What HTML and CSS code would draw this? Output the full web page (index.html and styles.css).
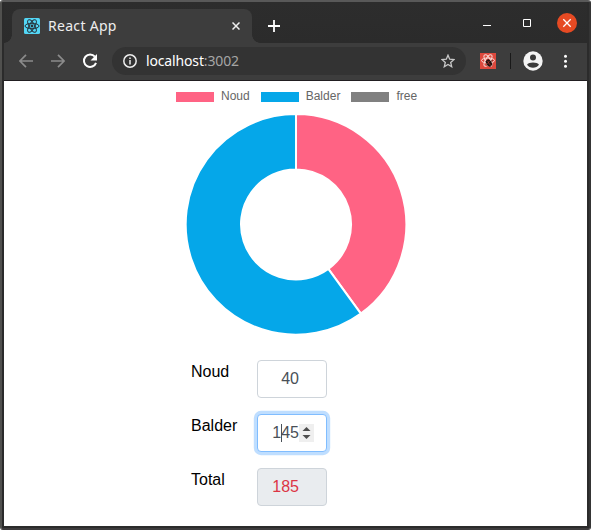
FILE: index.html
```html
<!DOCTYPE html>
<html lang="en">
<head>
<meta charset="utf-8">
<title>React App</title>
<link rel="stylesheet" href="styles.css">
</head>
<body>
<div class="window">
  <header class="titlebar">
    <div class="tab">
      <svg class="favicon" width="16" height="16" viewBox="0 0 16 16"><rect width="16" height="16" rx="1.5" fill="#53d6f5"/><g fill="none" stroke="#26323a" stroke-width="1"><ellipse cx="8" cy="8" rx="7" ry="2.7"/><ellipse cx="8" cy="8" rx="7" ry="2.7" transform="rotate(60 8 8)"/><ellipse cx="8" cy="8" rx="7" ry="2.7" transform="rotate(120 8 8)"/></g><circle cx="8" cy="8" r="1.4" fill="#26323a"/></svg>
      <span class="tab-title">React App</span>
      <svg class="tab-close" width="8" height="8" viewBox="0 0 8 8"><path d="M.5.5l7 7M7.500.5l-7 7" stroke="#eee" stroke-width="1.5"/></svg>
    </div>
    <svg class="new-tab" width="12" height="12" viewBox="0 0 12 12"><path d="M6 0v12M0 6h12" stroke="#fff" stroke-width="1.8"/></svg>
    <div class="controls">
      <svg width="8" height="10" viewBox="0 0 8 10"><path d="M0 7.500h8" stroke="#fff"/></svg>
      <svg width="8" height="8" viewBox="0 0 8 8"><path d="M.5.5h7v7h-7z" fill="none" stroke="#fff"/></svg>
      <svg width="20" height="20" viewBox="0 0 20 20"><circle cx="10" cy="10" r="10" fill="#e64a23"/><path d="M6.300 6.300l7.400 7.400M13.700 6.300l-7.400 7.400" stroke="#fff" stroke-width="1.300"/></svg>
    </div>
  </header>
  <nav class="toolbar">
    <svg class="back" width="14" height="14" viewBox="0 0 14 14"><path d="M14 7H1.300M7 .8L.9 7 7 13.200" fill="none" stroke="#8b8b8b" stroke-width="1.700"/></svg>
    <svg class="forward" width="14" height="14" viewBox="0 0 14 14"><path d="M0 7h12.700M7 .8L13.100 7 7 13.200" fill="none" stroke="#8b8b8b" stroke-width="1.700"/></svg>
    <svg class="reload" width="16" height="16" viewBox="0 0 16 16"><path d="M12.900 3.700A6.200 6.200 0 1 0 14 9.800" fill="none" stroke="#fff" stroke-width="2"/><path d="M15 1v6.500H8.500z" fill="#fff"/></svg>
    <div class="address">
      <svg width="14" height="14" viewBox="0 0 14 14"><circle cx="7" cy="7" r="6.200" fill="none" stroke="#ededed" stroke-width="1.500"/><path d="M7 6v4.600M7 3.400v1.500" stroke="#ededed" stroke-width="1.500"/></svg>
      <span class="url">localhost<span class="port">:3002</span></span>
      <svg class="star" width="14" height="14" viewBox="0 0 14 14"><path d="M7 1.200l1.700 4 4.300.4-3.300 2.800 1 4.300L7 10.400l-3.700 2.300 1-4.300L1 5.600l4.300-.4z" fill="none" stroke="#c9c9c9" stroke-width="1.300"/></svg>
    </div>
    <svg class="extension" width="16" height="16" viewBox="0 0 16 16"><rect width="16" height="16" fill="#dd493d"/><g fill="none" stroke="#f8dcd8" stroke-width="1"><ellipse cx="8" cy="7.500" rx="6.500" ry="2.500"/><ellipse cx="8" cy="7.500" rx="6.500" ry="2.500" transform="rotate(60 8 7.500)"/><ellipse cx="8" cy="7.500" rx="6.500" ry="2.500" transform="rotate(120 8 7.500)"/></g><ellipse cx="9" cy="10" rx="2.600" ry="3.600" fill="#24110f" transform="rotate(-35 9 10)"/><path d="M5.500 8.500l7 3.500M6.500 13l6-6M8 6l2 8" stroke="#24110f" stroke-width=".8"/><path d="M7.500 8l3 4.500M9.500 8l-2 3" stroke="#a9362e" stroke-width=".7"/></svg>
    <span class="divider"></span>
    <svg class="profile" width="20" height="20" viewBox="0 0 20 20"><circle cx="10" cy="10" r="9.700" fill="#f4f4f4"/><circle cx="10" cy="6.400" r="3" fill="#3b3b3b"/><path d="M4 13.700C5.500 10.800 14.500 10.800 16 13.700 13.500 17.600 6.500 17.600 4 13.700z" fill="#3b3b3b"/></svg>
    <svg class="menu" width="4" height="14" viewBox="0 0 4 14"><g fill="#fff"><circle cx="2.500" cy="2.300" r="1.500"/><circle cx="2.500" cy="7.300" r="1.500"/><circle cx="2.500" cy="12.300" r="1.500"/></g></svg>
  </nav>
  <main class="page">
    <div class="legend">
      <span class="key"><i class="swatch pink"></i>Noud</span>
      <span class="key"><i class="swatch blue"></i>Balder</span>
      <span class="key"><i class="swatch gray"></i>free</span>
    </div>
    <svg class="chart" width="222" height="223" viewBox="-111 -111.400 222 223">
      <g stroke="#fff" stroke-width="2">
        <path d="M0-110.300A110.300 110.300 0 0 1 64.830 89.230L32.330 44.500A55 55 0 0 0 0-55z" fill="#ff6384"/>
        <path d="M64.830 89.230A110.300 110.300 0 1 1 0-110.300V-55A55 55 0 1 0 32.330 44.500z" fill="#05a7e9"/>
      </g>
    </svg>
    <form class="form">
      <div class="row"><label for="noud">Noud</label><div class="field"><input id="noud" value="40"></div></div>
      <div class="row"><label for="balder">Balder</label><div class="field"><input id="balder" class="focused" value="145"><span class="caret"></span><svg class="spinner" width="15" height="18" viewBox="0 0 15 18"><path d="M0 0h15v18H0z" fill="#efefef"/><path d="M3.500 7L7.500 3l4 4zM3.500 11l4 4 4-4z" fill="#4d4d4d"/></svg></div></div>
      <div class="row"><label for="total">Total</label><div class="field"><input id="total" class="total" value="185" readonly></div></div>
    </form>
  </main>
</div>
</body>
</html>
```
FILE: styles.css
```css
* { box-sizing: border-box; }
body { margin: 0; background: #fff; font-family: "Liberation Sans", Arial, sans-serif; overflow: hidden; }
svg { display: block; flex: none; }
.window { width: 591px; height: 530px; display: flex; flex-direction: column; background: #2b2b2b; border-top: 2px solid #595959; border-left: 2px solid #50504e; border-right: 2px solid #353535; border-bottom: 2px solid #3d3b3c; border-radius: 3px; padding: 0 2px 2px; }
.titlebar { height: 41px; display: flex; align-items: flex-start; padding: 7px 10px 0 8px; background: linear-gradient(#2d2d2d, #2b2b2b); flex: none; }
.tab { position: relative; width: 240px; height: 34px; display: flex; align-items: center; padding: 0 12px; background: #3d3d3d; border-radius: 8px 8px 0 0; }
.tab::before, .tab::after { content: ""; position: absolute; bottom: 0; width: 8px; height: 8px; }
.tab::before { left: -8px; background: radial-gradient(circle at 0 0, transparent 7.5px, #3d3d3d 8px); }
.tab::after { right: -8px; background: radial-gradient(circle at 100% 0, transparent 7.5px, #3d3d3d 8px); }
.tab-title { margin-left: 8px; font: 14px/20px "Noto Sans", sans-serif; letter-spacing: .3px; color: #eee; white-space: nowrap; }
.tab-close { margin-left: auto; }
.new-tab { margin: 11px 0 0 16px; }
.controls { margin: 4px 0 0 auto; display: flex; align-items: center; gap: 32px; }
.controls svg:last-child { margin-left: -6px; }
.toolbar { height: 38px; flex: none; display: flex; align-items: center; padding: 0 20px 2px 15px; background: #3d3d3d; border-bottom: 1px solid #211e21; }
.forward { margin-left: 18px; }
.reload { margin-left: 17px; }
.address { margin-left: 14px; width: 354px; height: 28px; border-radius: 14px; background: #333; display: flex; align-items: center; padding: 0 11px; }
.url { margin-left: 9px; font: 14px/20px "Noto Sans", sans-serif; letter-spacing: -.15px; color: #fff; }
.port { color: #a5a5a5; }
.star { margin-left: auto; }
.extension { margin-left: 14px; }
.divider { width: 1px; height: 16px; background: #191919; margin-left: 14px; }
.profile { margin-left: 12px; }
.menu { margin-left: auto; }
.page { flex: 1; background: #fff; display: flex; flex-direction: column; min-height: 0; }
.legend { display: flex; gap: 11px; margin: 8px 0 0 172px; height: 14px; font-size: 12px; line-height: 14px; color: #666; }
.key { display: flex; align-items: center; }
.swatch { width: 38px; height: 10px; margin: 2px 7px 0 0; }
.pink { background: #ff6384; }
.blue { background: #05a7e9; }
.gray { background: #808080; }
.chart { margin: 10px 0 0 181px; }
.form { margin: 24px 0 0 187px; display: flex; flex-direction: column; gap: 16px; }
.row { display: flex; height: 38px; }
.row label { width: 66px; font-size: 16px; line-height: 24px; color: #000; }
.field { position: relative; width: 70px; }
input { display: block; width: 70px; height: 38px; padding: 6px 27px 6px 8px; border: 1px solid #ced4da; border-radius: 4px; background: #fff; font: 16px/24px "Liberation Sans", Arial, sans-serif; color: #495057; text-align: right; outline: none; }
.focused { border-color: #80bdff; box-shadow: 0 0 0 3.2px #bfdeff; }
.total { background: #e9ecef; color: #dc3545; }
.caret { position: absolute; left: 24px; top: 10px; width: 1px; height: 18px; background: #495057; }
.spinner { position: absolute; left: 42px; top: 10px; }
```
